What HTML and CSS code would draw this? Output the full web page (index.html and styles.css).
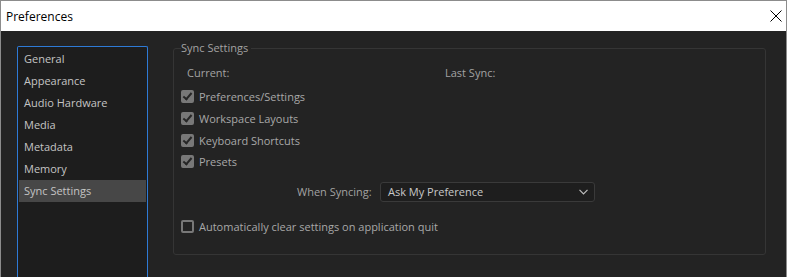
FILE: index.html
```html
<!DOCTYPE html>
<html lang="en">
<head>
  <meta charset="UTF-8" />
  <title>Preferences</title>
  <link rel="stylesheet" href="styles.css">
</head>
<body>

  <div class="window">

    <!-- Title bar -->
    <div class="titlebar">
      <span class="title">Preferences</span>
      <svg class="close" width="12" height="12" viewBox="0 0 12 12">
        <path d="M0.5 0.5 L11.5 11.5 M11.5 0.5 L0.5 11.5" stroke="#000" stroke-width="1" fill="none" />
      </svg>
    </div>

    <div class="content">

      <!-- Category list -->
      <ul class="categories">
        <li>General</li>
        <li>Appearance</li>
        <li>Audio Hardware</li>
        <li>Media</li>
        <li>Metadata</li>
        <li>Memory</li>
        <li class="selected">Sync Settings</li>
      </ul>

      <!-- Panel -->
      <div class="panel">
        <fieldset class="group">
          <legend>Sync Settings</legend>

          <div class="status-row">
            <span class="current">Current:</span>
            <span class="last-sync">Last Sync:</span>
          </div>

          <div class="checks">
            <label class="check"><span class="box checked"></span>Preferences/Settings</label>
            <label class="check"><span class="box checked"></span>Workspace Layouts</label>
            <label class="check"><span class="box checked"></span>Keyboard Shortcuts</label>
            <label class="check"><span class="box checked"></span>Presets</label>
          </div>

          <div class="syncing-row">
            <span class="syncing-label">When Syncing:</span>
            <div class="select">
              <span>Ask My Preference</span>
              <svg width="9" height="6" viewBox="0 0 9 6">
                <path d="M0.5 0.8 L4.5 4.8 L8.5 0.8" stroke="#bdbdbd" stroke-width="1.2" fill="none" />
              </svg>
            </div>
          </div>

          <label class="check auto-clear"><span class="box"></span>Automatically clear settings on application quit</label>
        </fieldset>
      </div>

    </div>
  </div>

</body>
</html>
```

FILE: styles.css
```css
body {
  margin: 0;
  padding: 0;
  background: #232323;
  font-family: 'Open Sans', sans-serif;
  font-size: 11px;
}

.window {
  width: 787px;
  height: 277px;
  box-sizing: border-box;
  border: 1px solid #8c8c8c;
  border-bottom: none;
  display: flex;
  flex-direction: column;
  overflow: hidden;
}

/* --- TITLE BAR --- */
.titlebar {
  height: 30px;
  background: #fff;
  display: flex;
  align-items: center;
  justify-content: space-between;
  padding: 0 4px 0 5px;
  flex-shrink: 0;
}

.title {
  font-size: 12px;
  color: #000;
}

/* --- CONTENT --- */
.content {
  flex: 1;
  display: flex;
  background: #232323;
  padding: 15px 0 0 16px;
}

.categories {
  list-style: none;
  margin: 0;
  padding: 1px 1px 0;
  width: 127px;
  border: 1px solid #2e7ad6;
  border-bottom: none;
  border-radius: 2px 2px 0 0;
  background: #1d1d1d;
}

.categories li {
  height: 22px;
  line-height: 22px;
  padding-left: 5px;
  color: #c4c4c4;
}

.categories li.selected {
  background: #474747;
}

.panel {
  flex: 1;
  padding: 0 20px 0 25px;
}

.group {
  margin: -5px 0 0;
  height: 214px;
  box-sizing: border-box;
  border: 1px solid #353535;
  border-radius: 3px;
  padding: 9px 0 0 7px;
}

.group legend {
  color: #a2a2a2;
  padding: 0 3px 0 0;
  margin-left: 0;
  line-height: 14px;
}

.status-row {
  display: flex;
  padding-left: 6px;
  color: #a2a2a2;
  height: 16px;
  align-items: center;
}

.current {
  width: 258px;
}

.checks {
  display: flex;
  flex-direction: column;
  margin-top: 6px;
}

.check {
  display: flex;
  align-items: center;
  height: 21.7px;
  color: #a8a8a8;
}

.box {
  width: 13px;
  height: 13px;
  box-sizing: border-box;
  border: 2px solid #787878;
  border-radius: 2px;
  margin-right: 5px;
  position: relative;
}

.box.checked {
  background: #787878;
}

.box.checked::after {
  content: "";
  position: absolute;
  left: 2px;
  top: -1px;
  width: 3px;
  height: 7px;
  border: solid #262626;
  border-width: 0 2px 2px 0;
  transform: rotate(40deg);
}

.syncing-row {
  display: flex;
  align-items: center;
  margin-top: 9px;
  padding-left: 116px;
}

.syncing-label {
  color: #a2a2a2;
  width: 83px;
}

.select {
  height: 18px;
  border: 1px solid #3a3a3a;
  border-radius: 3px;
  background: #1e1e1e;
  display: flex;
  align-items: center;
  justify-content: space-between;
  padding: 0 6px 0 7px;
  color: #c8c8c8;
  width: 200px;
}

.auto-clear {
  margin-top: 14px;
}
```
